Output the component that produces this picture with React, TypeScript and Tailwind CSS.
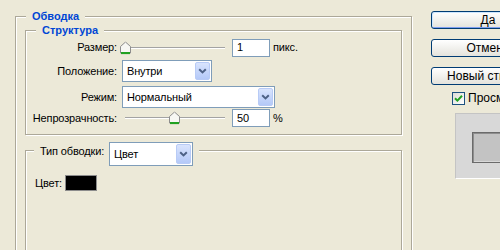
import React from "react";

const GB = "border border-[#aca899] shadow-[inset_1px_1px_0_#fff,1px_1px_0_#fff]";

const Chevron = () => (
  <svg width="9" height="6" viewBox="0 0 9 6">
    <path d="M1.2 1.2 L4.5 4.4 L7.8 1.2" stroke="#4d6185" strokeWidth="2" fill="none" />
  </svg>
);

function Select({ text, cls }: { text: string; cls: string }) {
  return (
    <div className={`flex items-stretch border border-[#7f9db9] bg-white p-[1px] ${cls}`}>
      <span className="flex flex-1 items-center pl-[3px]">{text}</span>
      <span className="flex w-[15px] items-center justify-center rounded-[2px] border border-[#b8cbf6] bg-gradient-to-b from-[#d9e4fd] to-[#b4c9f8]">
        <Chevron />
      </span>
    </div>
  );
}

const Thumb = () => (
  <svg width="11" height="13" viewBox="0 0 11 13">
    <path d="M0.5 5 L5.5 0.5 L10.5 5 V11.5 H0.5 Z" fill="#f7f7f3" stroke="#8d8d8d" />
    <rect x="1" y="10.5" width="9" height="2.2" fill="#21a121" />
  </svg>
);

function Slider({ thumbCls }: { thumbCls: string }) {
  return (
    <div className="relative flex h-full w-[112px] items-center">
      <div className="ml-[8px] h-[2px] w-[100px] border-b border-b-white bg-[#a3a3a3]" />
      <div className={`absolute top-1/2 -translate-y-1/2 ${thumbCls}`}>
        <Thumb />
      </div>
    </div>
  );
}

function Field({ v }: { v: string }) {
  return (
    <div className="ml-[3px] flex h-[18px] w-[38px] items-center border border-[#7f9db9] bg-white pl-[4px]">{v}</div>
  );
}

function Button({ label, def }: { label: string; def?: boolean }) {
  return (
    <div
      className={`flex h-[18px] w-[114px] shrink-0 items-center justify-center whitespace-nowrap rounded-[3px] border border-[#003c74] bg-gradient-to-b from-[#ffffff] to-[#e4e3dc] text-[12px] tracking-normal ${
        def ? "shadow-[inset_1px_1px_0_#cee7ff,inset_-1px_-1px_0_#7e9ef0]" : ""
      }`}
    >
      {label}
    </div>
  );
}

export default function App() {
  return (
    <div className="flex h-[250px] w-[500px] items-start overflow-hidden bg-[#ECE9D8] font-['Liberation_Sans',Arial,sans-serif] text-[11px] leading-[13px] tracking-[-0.15px] text-black">
      {/* Left panel */}
      <div className={`ml-[15px] mt-[16px] flex h-[260px] w-[397px] shrink-0 flex-col ${GB}`}>
        <div className="-mt-[7px] ml-[10px] w-fit bg-[#ECE9D8] px-[6px] font-bold tracking-normal text-[#0046d5]">Обводка</div>

        <div className={`mx-[9px] mt-[7px] pb-[7px] ${GB}`}>
          <div className="-mt-[7px] ml-[10px] w-fit bg-[#ECE9D8] px-[6px] font-bold tracking-normal text-[#0046d5]">Структура</div>

          <div className="mt-[1px] flex h-[19px] items-center">
            <span className="w-[91px] text-right">Размер:</span>
            <Slider thumbCls="left-[3px]" />
            <Field v="1" />
            <span className="ml-[3px]">пикс.</span>
          </div>

          <div className="mt-[3px] flex h-[22px] items-center">
            <span className="w-[91px] text-right">Положение:</span>
            <Select text="Внутри" cls="ml-[5px] h-[22px] w-[90px]" />
          </div>

          <div className="mt-[4px] flex h-[22px] items-center">
            <span className="w-[91px] text-right">Режим:</span>
            <Select text="Нормальный" cls="ml-[5px] h-[22px] w-[153px]" />
          </div>

          <div className="mt-[1px] flex h-[18px] items-center">
            <span className="w-[91px] text-right">Непрозрачность:</span>
            <Slider thumbCls="left-[52px]" />
            <Field v="50" />
            <span className="ml-[3px]">%</span>
          </div>
        </div>

        <div className={`mx-[9px] mb-[12px] mt-[15px] flex-1 ${GB}`}>
          <div className="-mt-[9px] ml-[8px] flex w-fit items-start bg-[#ECE9D8] px-[6px]">
            <span className="mt-[3px]">Тип обводки:</span>
            <Select text="Цвет" cls="ml-[5px] h-[24px] w-[84px]" />
          </div>
          <div className="ml-[9px] mt-[9px] flex items-center">
            <span>Цвет:</span>
            <div className="ml-[3px] h-[16px] w-[32px] border border-[#8c8c8c] bg-black" />
          </div>
        </div>
      </div>

      {/* Right column */}
      <div className="ml-[19px] mt-[11px] flex shrink-0 flex-col">
        <Button label="Да" def />
        <div className="mt-[10px]">
          <Button label="Отмена" />
        </div>
        <div className="mt-[10px]">
          <Button label="Новый стиль..." />
        </div>
        <div className="ml-[21px] mt-[7px] flex h-[13px] items-center">
          <div className="flex h-[13px] w-[13px] items-center justify-center border border-[#1c5180] bg-gradient-to-br from-[#dcdcd7] to-[#ffffff]">
            <svg width="9" height="9" viewBox="0 0 9 9">
              <path d="M1 4.2 L3.4 6.6 L8 1.8" stroke="#21a121" strokeWidth="2" fill="none" />
            </svg>
          </div>
          <span className="ml-[3px] whitespace-nowrap text-[12px] tracking-normal">Просмотр</span>
        </div>
        <div className="ml-[24px] mt-[8px] h-[66px] w-[100px] border border-[#c4c4c4] border-b-white border-r-white bg-[#d8d8d8]">
          <div className="ml-[16px] mt-[18px] h-[31px] w-[60px] border border-[#6b6b6b] bg-[#c3c3c3] shadow-[inset_1px_1px_0_#8e8e8e,inset_-1px_-1px_0_#d8d8d8]" />
        </div>
      </div>
    </div>
  );
}
